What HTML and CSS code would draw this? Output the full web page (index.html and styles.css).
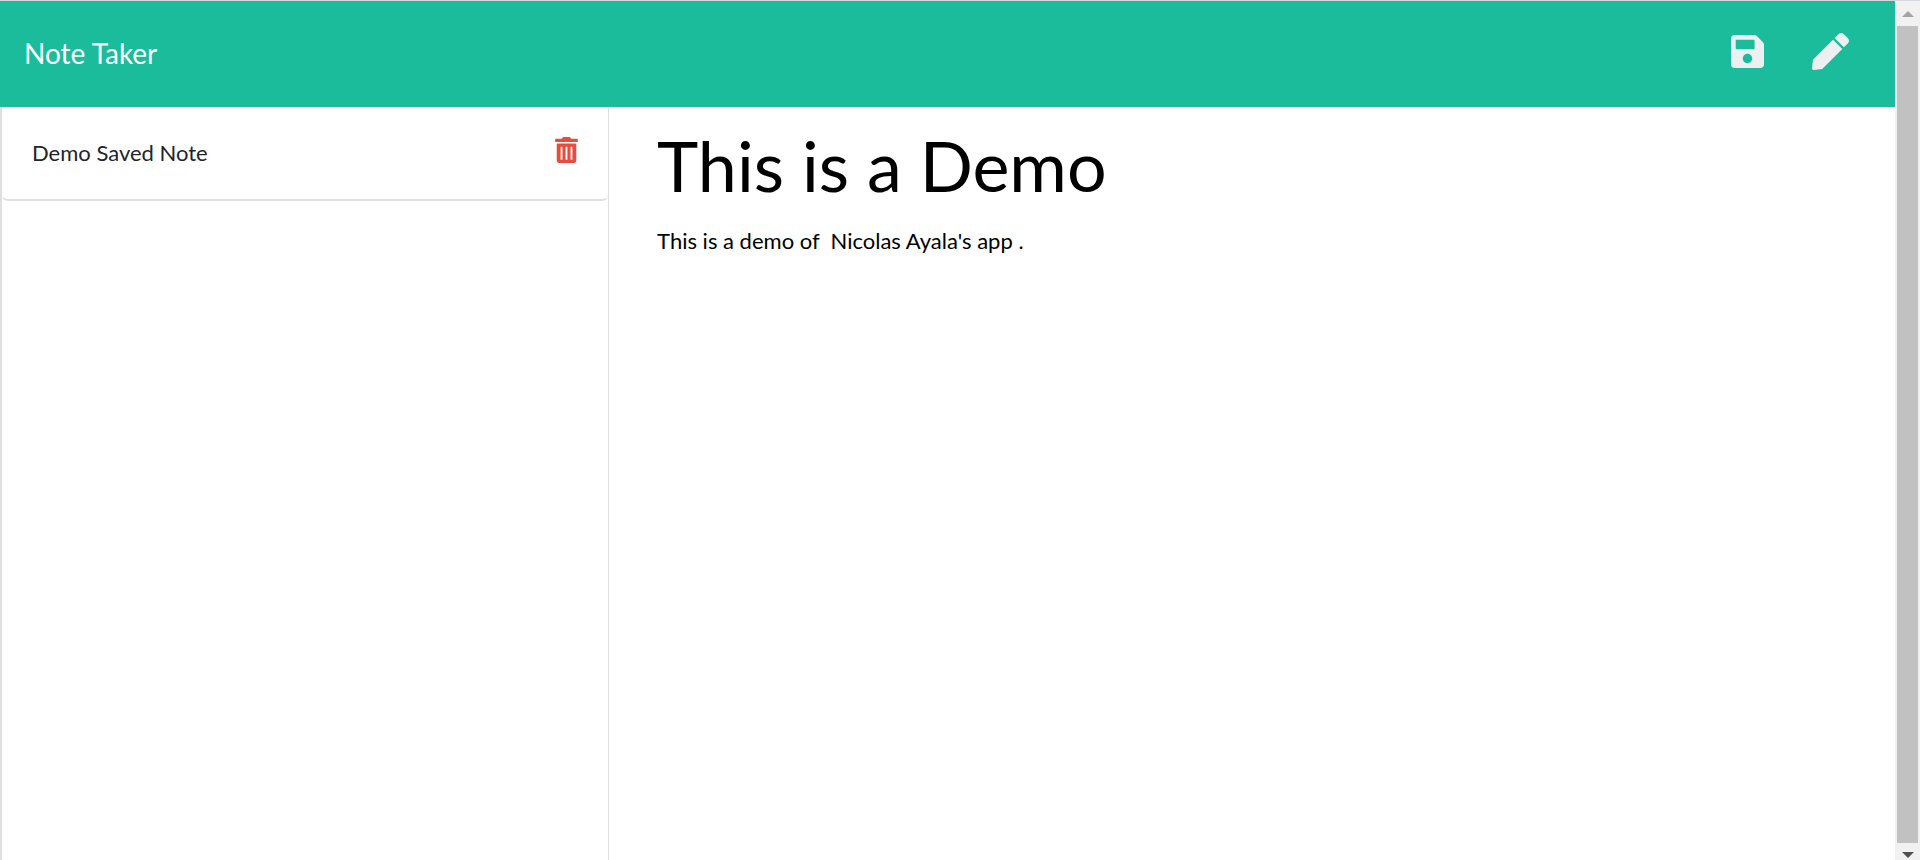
FILE: index.html
```html
<!DOCTYPE html>
<html lang="en">
<head>
<meta charset="utf-8">
<title>Note Taker</title>
<link rel="stylesheet" href="styles.css">
</head>
<body>
<div class="window">
  <div class="app">
    <header class="navbar">
      <a class="brand" href="#">Note Taker</a>
      <div class="actions">
        <button class="icon-button" type="button" aria-label="Save note">
          <svg class="icon-save" viewBox="0 32 448 448" aria-hidden="true"><path d="M433.941 129.941l-83.882-83.882A48 48 0 0 0 316.118 32H48C21.49 32 0 53.49 0 80v352c0 26.51 21.49 48 48 48h352c26.51 0 48-21.49 48-48V163.882a48 48 0 0 0-14.059-33.941zM224 416c-35.346 0-64-28.654-64-64 0-35.346 28.654-64 64-64s64 28.654 64 64c0 35.346-28.654 64-64 64zm96-304.52V212c0 6.627-5.373 12-12 12H76c-6.627 0-12-5.373-12-12V108c0-6.627 5.373-12 12-12h228.52c3.183 0 6.235 1.264 8.485 3.515l3.48 3.48A11.996 11.996 0 0 1 320 111.48z"/></svg>
        </button>
        <button class="icon-button" type="button" aria-label="New note">
          <svg class="icon-pen" viewBox="0 0 512 512" aria-hidden="true"><path d="M290.74 93.24l128.02 128.02-277.99 277.99-114.14 12.6C11.35 513.54-1.56 500.62.14 485.34l12.7-114.22 277.9-277.88zm207.2-19.06l-60.11-60.11c-18.75-18.75-49.16-18.75-67.91 0l-56.55 56.55 128.02 128.02 56.55-56.55c18.75-18.76 18.75-49.16 0-67.91z"/></svg>
        </button>
      </div>
    </header>
    <main class="content">
      <aside class="sidebar">
        <ul class="note-list">
          <li class="note">
            <a class="note-title" href="#">Demo Saved Note</a>
            <button class="icon-button" type="button" aria-label="Delete note">
              <svg class="icon-trash" viewBox="0 0 448 512" aria-hidden="true"><path fill-rule="evenodd" d="M0 84V56c0-13 11-24 24-24h112l9-19c4-8 13-13 22-13h114c9 0 17 5 21 13l10 19h112c13 0 24 11 24 24v28c0 7-5 12-12 12H12C5 96 0 91 0 84zM416 140v324c0 26-22 48-48 48H80c-26 0-48-22-48-48V140c0-7 5-12 12-12h360c7 0 12 5 12 12zM108 192v256h36V192zM206 192v256h36V192zM304 192v256h36V192z"/></svg>
            </button>
          </li>
        </ul>
      </aside>
      <section class="editor">
        <input class="editor-title" type="text" aria-label="Note title" value="This is a Demo">
        <textarea class="editor-text" aria-label="Note text">This is a demo of  Nicolas Ayala's app .</textarea>
      </section>
    </main>
  </div>
  <div class="scrollbar" aria-hidden="true">
    <svg class="arrow arrow-up" viewBox="0 0 12 6"><path d="M6 0L12 6H0z"/></svg>
    <div class="thumb"></div>
    <svg class="arrow arrow-down" viewBox="0 0 12 6"><path d="M0 0H12L6 6z"/></svg>
  </div>
</div>
</body>
</html>
```
FILE: styles.css
```css
* {
  box-sizing: border-box;
}

body {
  margin: 0;
  font-family: Lato, "Liberation Sans", sans-serif;
  font-size: 22px;
  line-height: 32px;
  color: #212529;
  background: #fff;
}

a {
  color: inherit;
  text-decoration: none;
}

.window {
  display: flex;
  height: 100vh;
  border-top: 1px solid #d5d8dc;
}

.app {
  display: flex;
  flex: 1;
  flex-direction: column;
  min-width: 0;
}

.navbar {
  display: flex;
  align-items: center;
  justify-content: space-between;
  height: 106px;
  padding: 0 46px 2px 24px;
  color: #fff;
  background: #1abc9c;
}

.brand {
  font-size: 28px;
}

.actions {
  display: flex;
  align-items: center;
  gap: 48px;
  padding-bottom: 4px;
}

.icon-button {
  display: flex;
  padding: 0;
  border: 0;
  background: none;
  cursor: pointer;
}

.icon-save {
  width: 33px;
  height: 33px;
  fill: #ecf0f1;
}

.icon-pen {
  width: 37px;
  height: 37px;
  fill: #ecf0f1;
}

.icon-trash {
  width: 23px;
  height: 26px;
  fill: #e74c3c;
}

.content {
  display: grid;
  flex: 1;
  grid-template-columns: 9fr 19fr;
}

.sidebar {
  border: solid #dfdfdf;
  border-width: 0 1px 0 2px;
}

.note-list {
  margin: 0;
  padding: 0;
  list-style: none;
}

.note {
  display: flex;
  align-items: flex-start;
  justify-content: space-between;
  height: 94px;
  padding: 30px;
  border-bottom: 2px solid #dfdfdf;
  border-radius: 0 0 6px 6px;
}

.editor {
  display: flex;
  flex-direction: column;
  padding: 16px 48px;
}

.editor-title,
.editor-text {
  width: 100%;
  padding: 0;
  border: 0;
  outline: 0;
  font-family: inherit;
  color: #000;
  background: none;
}

.editor-title {
  height: 84px;
  font-size: 70px;
}

.editor-text {
  flex: 1;
  margin-top: 18px;
  font-size: 22px;
  line-height: 32px;
  resize: none;
}

.scrollbar {
  display: flex;
  flex: 0 0 25px;
  flex-direction: column;
  align-items: center;
  gap: 9px;
  padding: 10px 2px 2px;
  background: #f1f1f1;
}

.thumb {
  flex: 1;
  width: 21px;
  background: #c1c1c1;
}

.arrow {
  width: 12px;
  height: 6px;
}

.arrow-up {
  fill: #a3a3a3;
}

.arrow-down {
  fill: #505050;
}
```
